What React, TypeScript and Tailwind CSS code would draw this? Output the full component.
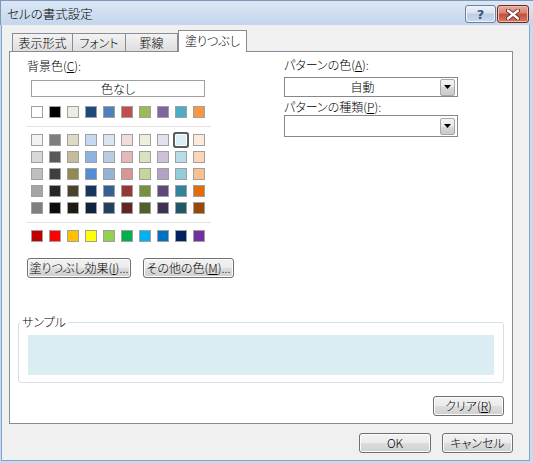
import React from "react";

const TOP = ["#FFFFFF", "#000000", "#EEECE1", "#1F497D", "#4F81BD", "#C0504D", "#9BBB59", "#8064A2", "#4BACC6", "#F79646"];
const THEME = [
  ["#F2F2F2", "#7F7F7F", "#DDD9C3", "#C6D9F0", "#DBE5F1", "#F2DCDB", "#EBF1DD", "#E5E0EC", "#DBEEF3", "#FDEADA"],
  ["#D8D8D8", "#595959", "#C4BD97", "#8DB3E2", "#B8CCE4", "#E5B9B7", "#D7E3BC", "#CCC1D9", "#B7DDE8", "#FBD5B5"],
  ["#BFBFBF", "#3F3F3F", "#938953", "#548DD4", "#95B3D7", "#D99694", "#C3D69B", "#B2A2C7", "#92CDDC", "#FAC08F"],
  ["#A5A5A5", "#262626", "#494429", "#17365D", "#366092", "#953734", "#76923C", "#5F497A", "#31859B", "#E36C09"],
  ["#7F7F7F", "#0C0C0C", "#1D1B10", "#0F243E", "#244061", "#632423", "#4F6128", "#3F3151", "#205867", "#974806"],
];
const STD = ["#C00000", "#FF0000", "#FFC000", "#FFFF00", "#92D050", "#00B050", "#00B0F0", "#0070C0", "#002060", "#7030A0"];

function Swatch({ color, selected }: { color: string; selected?: boolean }) {
  if (selected) {
    return (
      <div
        className="w-[12px] h-[12px] border border-white rounded-[1px] shadow-[0_0_0_2px_#5c5c5c]"
        style={{ backgroundColor: color }}
      />
    );
  }
  return <div className="w-[12px] h-[12px] border border-[#a0a0a0]" style={{ backgroundColor: color }} />;
}

function Row({ colors, sel }: { colors: string[]; sel?: number }) {
  return (
    <div className="flex gap-[6px]">
      {colors.map((c, i) => (
        <Swatch key={i} color={c} selected={sel === i} />
      ))}
    </div>
  );
}

const btn =
  "flex items-center justify-center h-[20px] border border-[#707070] rounded-[3px] bg-[linear-gradient(to_bottom,#f2f2f2_0%,#ebebeb_50%,#dddddd_50%,#cfcfcf_100%)] shadow-[inset_0_0_0_1px_#fbfbfb] text-[12px] leading-[14px] text-black";

function Arrow() {
  return (
    <div className="w-[15px] h-[17px] mr-[2px] flex items-center justify-center border border-[#a8a8a8] rounded-[2px] bg-[linear-gradient(to_bottom,#f4f4f4_0%,#e8e8e8_50%,#d8d8d8_50%,#cacaca_100%)]">
      <svg width="7" height="4" viewBox="0 0 7 4">
        <path d="M0 0H7L3.5 4Z" fill="#000" />
      </svg>
    </div>
  );
}

export default function App() {
  return (
    <div className="w-[533px] h-[463px] flex flex-col bg-[#c9daef] pl-[1px] pr-[3px] pb-[2px] font-['Noto_Sans_CJK_JP',sans-serif] font-light [font-feature-settings:'palt'] text-black text-[12px] leading-[14px] overflow-hidden">
      {/* title bar */}
      <div className="h-[25px] -ml-[1px] -mr-[3px] flex items-start bg-[linear-gradient(to_bottom,#dbe7f5,#c4d6ed)] border-t border-l border-[#7e98b8]">
        <div className="pl-[6px] pt-[5px] text-[12.5px] leading-[16px]">セルの書式設定</div>
        <div className="ml-auto mt-[4px] mr-[4px] flex gap-[1px]">
          <div className="w-[31px] h-[18px] rounded-[3px] border border-[#6e809b] bg-[linear-gradient(to_bottom,#eef3fa_0%,#d6e2f1_45%,#bccde4_50%,#c9d9ee_100%)] shadow-[inset_0_0_0_1px_#eef4fb] flex items-center justify-center text-[13px] font-bold text-[#3b5478] leading-none font-['DejaVu_Sans',sans-serif]">
            ?
          </div>
          <div className="w-[32px] h-[18px] rounded-[3px] border border-[#6f2a22] bg-[linear-gradient(to_bottom,#e9a99b_0%,#d88170_45%,#c24f3c_50%,#d47a5c_100%)] shadow-[inset_0_0_0_1px_#f0b8a8] flex items-center justify-center">
            <svg width="14" height="11" viewBox="0 0 14 11">
              <path d="M2 1.5L12 9.5M12 1.5L2 9.5" stroke="#5a1e16" strokeWidth="4" strokeLinecap="round" />
              <path d="M2 1.5L12 9.5M12 1.5L2 9.5" stroke="#ffffff" strokeWidth="2.4" strokeLinecap="round" />
            </svg>
          </div>
        </div>
      </div>

      {/* body */}
      <div className="flex-1 flex flex-col bg-[#f0f0f0] border-x border-b border-[#7fa5cf] pl-[7px] pr-[16px] pt-[5px]">
        {/* tabs */}
        <div className="flex items-end h-[21px] pl-[3px]">
          <div className="w-[61px] h-[18px] border border-b-0 border-[#898c95] bg-[linear-gradient(to_bottom,#f3f3f3,#dedede)] flex items-center justify-center">表示形式</div>
          <div className="w-[53px] h-[18px] border border-b-0 border-l-0 border-[#898c95] bg-[linear-gradient(to_bottom,#f3f3f3,#dedede)] flex items-center justify-center">フォント</div>
          <div className="w-[52px] h-[18px] border border-b-0 border-l-0 border-[#898c95] bg-[linear-gradient(to_bottom,#f3f3f3,#dedede)] flex items-center justify-center">罫線</div>
          <div className="w-[69px] h-[22px] -mb-[1px] relative z-10 border border-b-0 border-[#898c95] bg-white flex items-center justify-center pb-[1px]">塗りつぶし</div>
        </div>

        {/* panel */}
        <div className="w-[504px] h-[373px] border border-[#898c95] bg-white flex flex-col">
          <div className="flex">
            {/* left column */}
            <div className="ml-[16px] w-[249px] flex flex-col">
              <div className="mt-[7px] ml-[1px] h-[14px]">
                背景色(<span className="underline">C</span>):
              </div>
              <div className="mt-[7px] ml-[5px] w-[174px] h-[17px] border border-[#a0a0a0] flex items-center justify-center">色なし</div>
              <div className="mt-[9px] ml-[5px]">
                <Row colors={TOP} />
              </div>
              <div className="mt-[8px] w-[185px] h-[1px] bg-[#e2e2e2]" />
              <div className="mt-[7px] ml-[5px] flex flex-col gap-[5px]">
                {THEME.map((r, i) => (
                  <Row key={i} colors={r} sel={i === 0 ? 8 : undefined} />
                ))}
              </div>
              <div className="mt-[8px] w-[185px] h-[1px] bg-[#e2e2e2]" />
              <div className="mt-[7px] ml-[5px]">
                <Row colors={STD} />
              </div>
              <div className="mt-[16px] ml-[1px] flex gap-[12px]">
                <div className={`${btn} w-[104px]`}>
                  塗りつぶし効果(<span className="underline">I</span>)...
                </div>
                <div className={`${btn} w-[91px]`}>
                  その他の色(<span className="underline">M</span>)...
                </div>
              </div>
            </div>

            {/* right column */}
            <div className="ml-[9px] w-[174px] flex flex-col">
              <div className="mt-[6px] h-[14px]">
                パターンの色(<span className="underline">A</span>):
              </div>
              <div className="mt-[5px] h-[20px] border border-[#828790] bg-white flex items-center">
                <div className="flex-1 text-center">自動</div>
                <Arrow />
              </div>
              <div className="mt-[3px] h-[14px]">
                パターンの種類(<span className="underline">P</span>):
              </div>
              <div className="mt-[1px] h-[22px] border border-[#828790] bg-white flex items-center">
                <div className="flex-1" />
                <Arrow />
              </div>
            </div>
          </div>

          {/* sample */}
          <div className="relative mt-[44px] mx-[8px] h-[61px] border border-[#d5dfe5] rounded-[3px] px-[9px] pt-[12px]">
            <div className="absolute left-[1px] -top-[8px] bg-white px-[2px]">サンプル</div>
            <div className="h-[40px] bg-[#daedf3]" />
          </div>

          <div className="mt-[13px] mr-[8px] flex justify-end">
            <div className={`${btn} w-[71px]`}>
              クリア(<span className="underline">R</span>)
            </div>
          </div>
        </div>

        {/* footer */}
        <div className="mt-[9px] flex justify-end gap-[11px]">
          <div className={`${btn} w-[72px] border-[#3c7fb1] shadow-[inset_0_0_0_1px_#bfe3f7]`}>OK</div>
          <div className={`${btn} w-[71px]`}>キャンセル</div>
        </div>
      </div>
    </div>
  );
}
